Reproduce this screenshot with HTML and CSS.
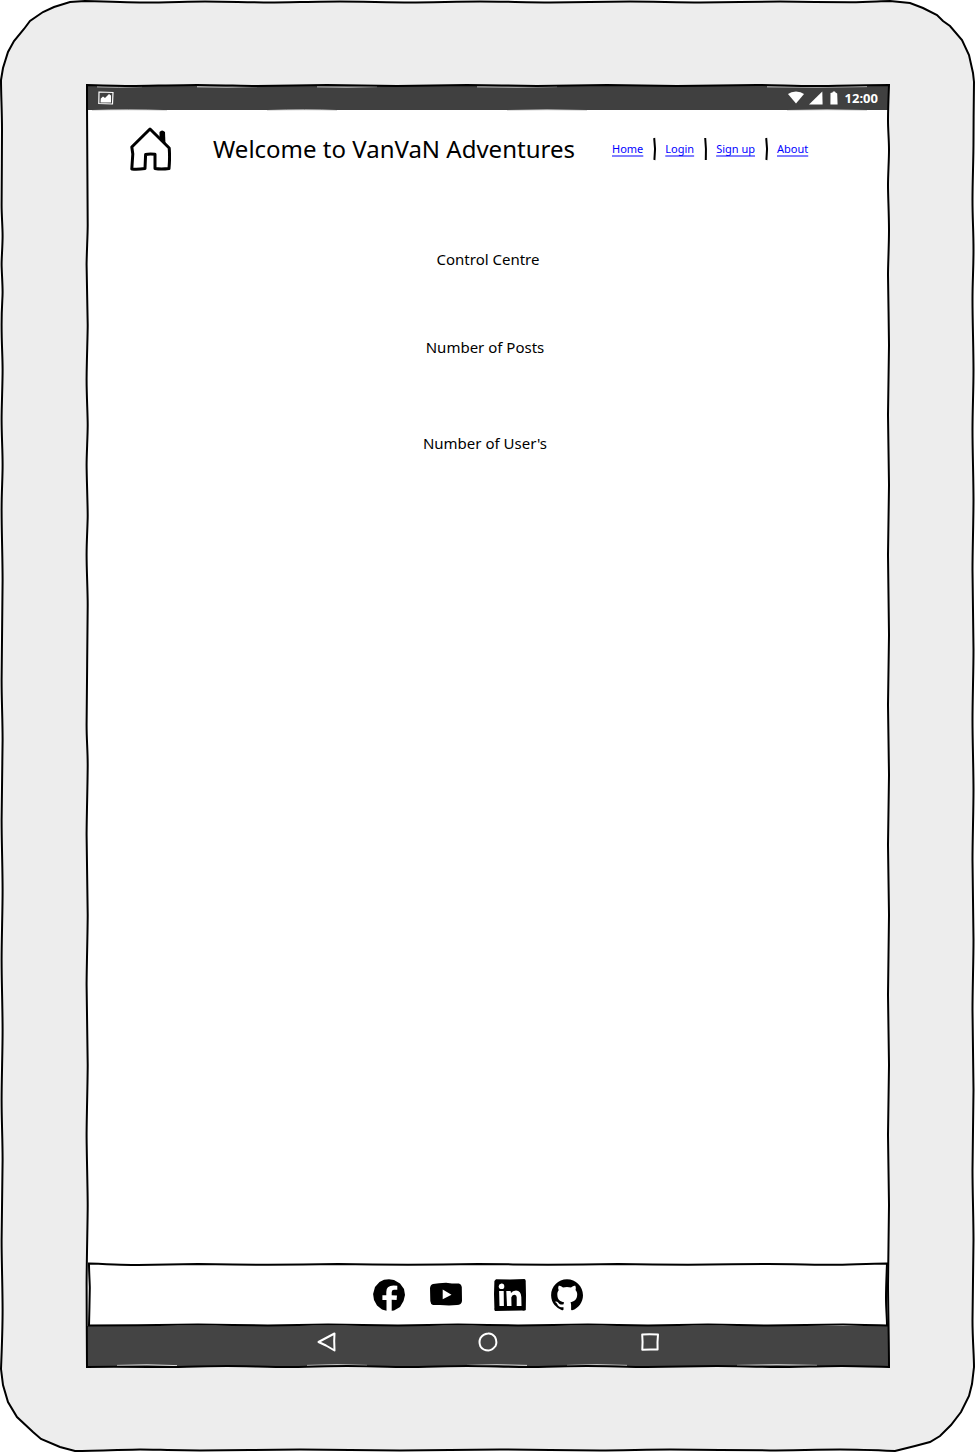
FILE: index.html
```html
<!DOCTYPE html>
<html lang="en">
<head>
<meta charset="utf-8">
<meta name="viewport" content="width=device-width, initial-scale=1">
<title>VanVaN Adventures</title>
<link rel="stylesheet" href="styles.css">
</head>
<body>
<div class="device">
  <svg class="outline" viewBox="0 0 975 1452" preserveAspectRatio="none" aria-hidden="true">
    <path class="case" d="M1 80L3 68L8 52L14 41L24 29L30 21L43 12L54 7L70 2L85 1S125 2.400 145 2.400S190 1.500 205 1.500S255 2.400 270 2.400S320 1.500 340 1.500S390 2.400 410 2.400S460 1.500 480 1.500S530 2.400 550 2.400S610 1.500 630 1.500S680 2.400 700 2.400S760 1.600 780 1.600S830 2.200 850 2.200S880 1 890 1L910 3L923 8L937 15L943 21L950 26L962 40L969 55L973 73L974 82S973.500 120 973.500 140S972.500 180 972.500 200S973.500 230 973.500 250S972.500 280 972.500 300S973.500 350 973.500 370S972.500 410 972.500 430S973.500 480 973.500 500S972.500 550 972.500 570S973.500 630 973.500 650S972.500 700 972.500 720S973.500 770 973.500 790S972.500 840 972.500 860S973.500 920 973.500 940S972.500 990 972.500 1010S973.500 1070 973.500 1090S972.500 1150 972.500 1170S973.500 1220 973.500 1240S972.500 1300 972.500 1320S974 1355 974 1367L972 1384L969 1396L961 1412L951 1425L940 1436L930 1442L915 1446L895 1451S860 1449.500 840 1449.500S790 1450.400 770 1450.400S690 1449.500 670 1449.500S620 1450.400 600 1450.400S520 1449.500 500 1449.500S420 1450.400 400 1450.400S320 1449.500 300 1449.500S220 1450.400 200 1450.400S150 1449.500 140 1449.500S95 1451 75 1451L60 1447L41 1439L33 1432L17 1417L8 1402L3 1385L1 1369S2.600 1330 2.600 1310S1.600 1260 1.600 1240S2.600 1180 2.600 1160S1.600 1120 1.600 1100S2.600 1050 2.600 1030S1.600 980 1.600 960S2.600 910 2.600 890S1.600 840 1.600 820S2.600 760 2.600 740S1.600 700 1.600 680S2.600 600 2.600 580S1.600 530 1.600 510S2.600 480 2.600 465S1.600 435 1.600 420S2.600 385 2.600 370S1.600 345 1.600 325S2.600 300 2.600 292S1.600 270 1.600 264S2.600 245 2.600 236S1.600 215 1.600 205S2 150 2 130S1 95 1 80Z"/>
  </svg>
  <div class="screen">
    <header class="status">
      <svg class="status-icon" viewBox="0 0 16 14" aria-hidden="true"><path d="M1 1L15 1.500L14.500 13L.8 12.500Z" fill="none" stroke="#fff" stroke-width="1.200"/><path d="M2.500 11.500L2.800 7.500L5 5.500L7 7L9.500 4.500L11 3L13 4.500V11.500Z" fill="#fff"/></svg>
      <div class="status-right">
        <svg width="16" height="13" viewBox="0 0 16 13" aria-hidden="true"><path d="M0 3Q3 .5 8 .5T16 3L8 12.500Z" fill="#fff"/></svg>
        <svg width="16" height="14" viewBox="0 0 16 14" aria-hidden="true"><path d="M0 13.500L13.300 .5L13.600 13.500Z" fill="#fff"/></svg>
        <svg width="10" height="14" viewBox="0 0 10 14" aria-hidden="true"><path d="M.5 2L2.500 1.500L3 .5H5L5.500 1.500L7.200 2.500L7.600 13.500H.4Z" fill="#fff"/></svg>
        <time class="clock">12:00</time>
      </div>
    </header>
    <div class="header">
      <svg class="house" viewBox="0 0 42 44" aria-hidden="true"><path d="M21 2L2.800 20L3.800 27L2.800 42Q9 42.500 16 41.500L16.600 27.500Q20 26.500 26 27.200V41.500Q32 42.500 40 41.500Q41 30 40.200 21Z" fill="none" stroke="#000" stroke-width="3" stroke-linejoin="round"/><path d="M30.500 5Q33 2 36 5L36.500 18L30.500 12Z" fill="#000"/></svg>
      <h1 class="title">Welcome to VanVaN Adventures</h1>
      <nav class="links" aria-label="Main">
        <a href="#home">Home</a>
        <svg class="bar" viewBox="0 0 2 24" aria-hidden="true"><path d="M1.200 1Q2.800 12 1.400 23"/></svg>
        <a href="#login">Login</a>
        <svg class="bar" viewBox="0 0 2 24" aria-hidden="true"><path d="M1.200 1Q2.400 12 1.800 23"/></svg>
        <a href="#signup">Sign up</a>
        <svg class="bar" viewBox="0 0 2 24" aria-hidden="true"><path d="M1.200 1Q2.800 12 1.400 23"/></svg>
        <a href="#about">About</a>
      </nav>
    </div>
    <main class="content">
      <h2 class="label">Control Centre</h2>
      <p class="label posts">Number of Posts</p>
      <p class="label users">Number of User's</p>
    </main>
    <footer class="footer">
      <svg class="outline" viewBox="0 0 800 63" preserveAspectRatio="none" aria-hidden="true"><path d="M1 .5S40 2 50 2S100 1 110 1S170 1.800 180 1.800S240 1 250 1S310 1.800 320 1.800S380 1 390 1S450 1.800 460 1.800S520 1 530 1S590 1.800 600 1.800S660 1 680 1S730 1.800 745 1.800S780 .5 799 .5L799 .5S798 25 798 35S799 55 799 62.500L799 62.500S765 61.500 755 61.500S690 62.500 680 62.500S630 61.500 620 61.500S570 62.500 560 62.500S510 61.500 500 61.500S440 62.500 430 62.500S380 61.500 370 61.500S320 62.500 310 62.500S250 61.500 240 61.500S190 62.500 180 62.500S120 61.500 110 61.500S30 62.500 1 62.500L1 62.500S1.800 30 1.800 25S1 10 1 .5Z"/></svg>
      <a class="social" href="#facebook" aria-label="Facebook"><svg viewBox="0 0 32 32" aria-hidden="true"><path d="M16 .2L21 1L27 4.500L31 10L32 16L30.500 22L27 28L21 31.400L18.700 31.800V20.800L23.600 21L24 16.500L18.700 16.200V13Q19 10.500 21.500 10.800H24.300V6.800Q13 5 13.300 13V16.200L9.400 16.300V21L13.500 20.900V31.800L9 30.500L4 26.500L1 21L.1 15L2 8L6.500 3L11 .8Z"/></svg></a>
      <a class="social" href="#youtube" aria-label="YouTube"><svg viewBox="0 0 32 32" aria-hidden="true"><path fill-rule="evenodd" d="M3 5L9 4.300L16 3.800L22 4.600L29 4.500Q31.500 5 31.800 8L32 22Q31.500 26 27 26L19 26.500L10 26L3 26Q.5 25 .3 22L0 9Q.5 5.500 3 5ZM12.700 10.500V20.200L21.500 15.700Z"/></svg></a>
      <a class="social linkedin" href="#linkedin" aria-label="LinkedIn"><svg viewBox="0 0 32 32" aria-hidden="true"><path fill-rule="evenodd" d="M2 .3L16 .6L30.500 0Q32 .5 31.700 3L32 16L31.800 31Q31 32 28 31.600L14 31.800L1 32Q0 31 .4 29L0 15L.4 2ZM7.400 4.600Q4.600 5 4.700 7.500T7.600 10.100T10.300 7.300T7.400 4.600ZM5.100 12L5.500 27H9.900L9.700 12ZM12.300 12L13 27H17.500L17.300 18.500Q18 15.500 20.500 15.700T22.700 19V27H27.500L27.300 18Q27 11.700 22 11.500Q18.500 11.500 17 14L16.600 12Z"/></svg></a>
      <a class="social" href="#github" aria-label="GitHub"><svg viewBox="0 0 32 32" aria-hidden="true"><path d="M16 .3C7.200 .3 .1 7.500 .1 16.200C.1 20 1.500 23.500 3.500 26Q7 30 11 31.300C11.800 31.400 12.500 31 12.500 30.600V28.200C7.500 28.600 6.600 25.700 6.600 25.700C5.900 23.900 4.900 23.400 4.900 23.400C3.500 22.400 5 22.400 5 22.400C6.600 22.500 7.500 24 7.500 24C8.900 26 11.200 25.700 12.600 25.300C12.700 24.300 12.900 23.600 13.100 23.200C9.500 22.800 6.300 21.400 6.300 15.300C6.300 13.600 6.900 12.200 7.800 11.100C7.300 10.700 6.800 9 7.700 6.800C7.700 6.800 9 6.400 12 8.500C14.600 7.800 17.300 7.800 20 8.500C23 6.400 24.300 6.800 24.300 6.800C25.200 9 24.700 10.700 24.500 11.100C25.600 12.200 26.200 13.600 26.200 15.300C26.200 21.400 22.500 22.800 19.500 23.200C19.800 23.700 20.100 24.700 20.100 26.200V30.600C20.100 31 20.400 31.500 21.200 31.300C27.500 29.200 32 23.300 32 16.200C32 7.500 24.800 .3 16 .3Z"/></svg></a>
    </footer>
    <div class="keys">
      <button class="key" type="button" aria-label="Back"><svg viewBox="0 0 20 20" aria-hidden="true"><path d="M2.500 10L18.500 1.500L18.200 9L18.500 18.500L10 13.500Z"/></svg></button>
      <button class="key" type="button" aria-label="Home screen"><svg viewBox="0 0 20 20" aria-hidden="true"><path d="M10 1.500Q14 1 17 5Q19.500 10 17.500 14Q14 18.500 10.500 18.500Q5 18.500 2.500 14.500Q.5 10 2.500 6Q5 2 10 1.500Z"/></svg></button>
      <button class="key" type="button" aria-label="Recent apps"><svg viewBox="0 0 20 20" aria-hidden="true"><path d="M2.200 2.500Q10 1.800 18 2.600Q17.200 10 17.600 17.600Q10 17.200 2.300 17.700Q2.900 10 2.200 2.500Z"/></svg></button>
    </div>
    <svg class="outline" viewBox="0 0 802 1282" preserveAspectRatio="none" aria-hidden="true">
      <path class="gap" d="M10 1.800Q30 2.500 55 1.600M110 1.800Q140 2.500 170 1.600M230 1.800Q260 2.500 290 1.600M390 1.800Q430 2.500 470 1.600M680 1.800Q730 2.500 780 1.600M30 1280.400Q60 1279 90 1280.600M220 1280.400Q250 1279 280 1280.400M380 1280.400Q410 1279 440 1280.400M480 1280.400Q510 1279 540 1280.400M650 1280.400Q690 1279 730 1280.400M5 25.500Q40 24.300 80 25.600M180 25.500Q220 24.300 250 25.500M420 25.500Q460 24.300 500 25.500M700 25.500Q740 24.300 780 25.500"/>
      <path d="M0 0S35 1 45 1S95 0 110 0S160 1 170 1S225 0 240 0S295 1 310 1S365 0 380 0S435 1 450 1S505 0 520 0S575 1 590 1S655 0 670 0S710 1 725 1S770 0 802 0L802 0S801 25 801 35S802 55 802 65S801 90 801 100S802 130 802 145S801 180 801 190S802 245 802 260S801 315 801 330S802 385 802 400S801 455 801 470S802 535 802 550S801 605 801 620S802 675 802 690S801 745 801 760S802 815 802 830S801 895 801 910S802 965 802 980S801 1035 801 1050S802 1105 802 1120S801 1185 801 1200S802 1260 802 1282L802 1282S770 1281 755 1281S705 1282 690 1282S645 1281 630 1281S575 1282 560 1282S515 1281 500 1281S455 1282 440 1282S395 1281 380 1281S335 1282 320 1282S275 1281 260 1281S215 1282 200 1282S155 1281 140 1281S95 1282 80 1282S20 1281.500 0 1282L0 1282S-.4 1220 -.4 1200S.7 1135 .7 1120S-.4 1065 -.4 1050S.7 995 .7 980S-.4 915 -.4 900S.7 845 .7 830S-.4 765 -.4 750S.7 695 .7 680S-.4 655 -.4 640S.7 535 .7 520S-.4 485 -.4 470S.7 440 .7 430S-.4 390 -.4 380S.7 350 .7 340S-.4 310 -.4 295S.7 250 .7 240S-.4 190 -.4 180S.7 150 .7 140S0 60 0 0Z"/>
    </svg>
  </div>
</div>
</body>
</html>
```
FILE: styles.css
```css
* {
  box-sizing: border-box;
}

body {
  margin: 0;
  background: #fff;
  color: #000;
  font-family: "Noto Sans", "Open Sans", sans-serif;
}

.device {
  position: relative;
  display: flex;
  min-height: 100vh;
  padding: 85px 86px 85px 87px;
}

.outline {
  position: absolute;
  inset: 0;
  width: 100%;
  height: 100%;
  overflow: visible;
  pointer-events: none;
}

.outline path {
  fill: none;
  stroke: #000;
  stroke-width: 2px;
  vector-effect: non-scaling-stroke;
}

.outline .case {
  fill: #ededed;
}

.outline .gap {
  stroke: #ddd;
  stroke-width: 1px;
}

.screen {
  position: relative;
  display: flex;
  flex: 1;
  flex-direction: column;
  background: #fff;
}

.status {
  display: flex;
  align-items: center;
  justify-content: space-between;
  height: 25px;
  padding: 0 11px;
  background: #404040;
}

.status-icon {
  width: 16px;
  height: 14px;
}

.status-right {
  display: flex;
  align-items: center;
  gap: 5px;
}

.clock {
  color: #fff;
  font-size: 13px;
  font-weight: 700;
  line-height: 22px;
}

.header {
  display: grid;
  grid-template-columns: 42px 355px 1fr;
  column-gap: 42px;
  align-items: center;
  height: 78px;
  padding-left: 42px;
}

.house {
  width: 42px;
  height: 44px;
}

.title {
  margin: 0;
  font-size: 24px;
  font-weight: 400;
  line-height: 32px;
  white-space: nowrap;
}

.links {
  display: flex;
  align-items: center;
  gap: 10px;
  padding-left: 2px;
  font-size: 11px;
  line-height: 16px;
  white-space: nowrap;
}

.links a {
  color: #00f;
  text-decoration: underline 2px #8080ff;
  text-decoration-skip-ink: none;
  text-underline-offset: 2px;
}

.bar {
  width: 2px;
  height: 24px;
  overflow: visible;
  fill: none;
  stroke: #000;
  stroke-width: 2px;
}

.content {
  flex: 1;
  padding-top: 59px;
  text-align: center;
}

.label {
  margin: 0;
  font-size: 15px;
  font-weight: 400;
  line-height: 24px;
}

.posts {
  margin-top: 64px;
  padding-right: 6px;
}

.users {
  margin-top: 72px;
  padding-right: 6px;
}

.footer {
  position: relative;
  display: flex;
  align-items: center;
  justify-content: center;
  gap: 25px;
  height: 63px;
  margin: 0 1px;
  padding-right: 21px;
}

.social {
  width: 32px;
  height: 32px;
  color: #000;
}

.social svg {
  display: block;
  fill: currentColor;
}

.linkedin {
  margin-left: 7px;
}

.keys {
  display: flex;
  justify-content: center;
  gap: 142px;
  height: 41px;
  padding-top: 6px;
  background: #444;
}

.key {
  width: 20px;
  height: 20px;
  padding: 0;
  border: 0;
  background: none;
}

.key svg {
  display: block;
  fill: none;
  stroke: #fff;
  stroke-width: 2px;
  stroke-linejoin: round;
}
```
